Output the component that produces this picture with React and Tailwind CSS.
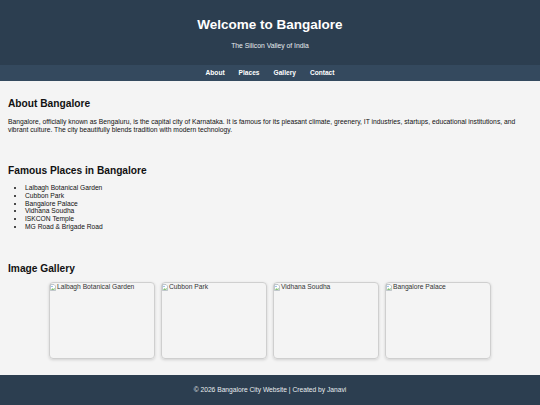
const PLACES = [
  'Lalbagh Botanical Garden',
  'Cubbon Park',
  'Bangalore Palace',
  'Vidhana Soudha',
  'ISKCON Temple',
  'MG Road & Brigade Road',
];

const GALLERY = ['Lalbagh Botanical Garden', 'Cubbon Park', 'Vidhana Soudha', 'Bangalore Palace'];

// little "broken image" glyph the browser shows for a missing src
function BrokenImg() {
  return (
    <svg width="6" height="7" viewBox="0 0 6 7" className="shrink-0 mt-[1px]">
      <path d="M0.5 0.5h3.5l1.5 1.5v4.5h-5z" fill="#fff" stroke="#9aa4ad" strokeWidth="0.6" />
      <path d="M1 5.8l1.3-1.6 1 1 1.2-1.4v2z" fill="#5fae4e" />
      <circle cx="2" cy="2.4" r="0.6" fill="#4a90d9" />
    </svg>
  );
}

export default function App() {
  return (
    <div className="min-h-[405px] bg-[#f4f4f4] text-[#111] font-['Liberation_Sans',Arial,sans-serif]">
      <header className="bg-[#2c3e50] text-white text-center h-[65px] pt-[17px]">
        <h1 className="text-[13.5px] leading-[16px] font-bold">Welcome to Bangalore</h1>
        <p className="text-[6.8px] leading-[8px] mt-[9px] text-[#e8ecef]">The Silicon Valley of India</p>
      </header>

      <nav className="bg-[#34495e] h-[16px] flex items-center justify-center gap-[14px] text-white text-[6.6px] font-bold">
        <a>About</a>
        <a>Places</a>
        <a>Gallery</a>
        <a>Contact</a>
      </nav>

      <main className="px-2">
        <section className="pt-[16px]">
          <h2 className="text-[10.2px] leading-[14px] font-bold">About Bangalore</h2>
          <p className="mt-[7px] text-[6.76px] leading-[8px]">
            Bangalore, officially known as Bengaluru, is the capital city of Karnataka. It is famous for its pleasant climate, greenery, IT industries, startups, educational institutions, and vibrant culture. The city beautifully blends tradition with modern technology.
          </p>
        </section>

        <section className="pt-[30px]">
          <h2 className="text-[10.2px] leading-[14px] font-bold">Famous Places in Bangalore</h2>
          <ul className="mt-[6px] list-disc pl-[17px] text-[6.7px] leading-[7.8px]">
            {PLACES.map((p) => (
              <li key={p}>{p}</li>
            ))}
          </ul>
        </section>

        <section className="pt-[31px]">
          <h2 className="text-[10.2px] leading-[14px] font-bold">Image Gallery</h2>
          <div className="mt-[6px] flex justify-center gap-[6px]">
            {GALLERY.map((g) => (
              <div
                key={g}
                className="w-[106px] h-[77px] border border-[#cfcfcf] rounded-[4px] shadow-[0_1px_3px_rgba(0,0,0,0.15)] flex items-start gap-[1px] text-[6.7px] leading-[8px] text-[#333]"
              >
                <BrokenImg />
                <span>{g}</span>
              </div>
            ))}
          </div>
        </section>
      </main>

      <footer className="mt-[16px] bg-[#2c3e50] h-[30px] flex items-center justify-center text-[6.7px] text-[#e8ecef]">
        © 2026 Bangalore City Website | Created by Janavi
      </footer>
    </div>
  );
}
